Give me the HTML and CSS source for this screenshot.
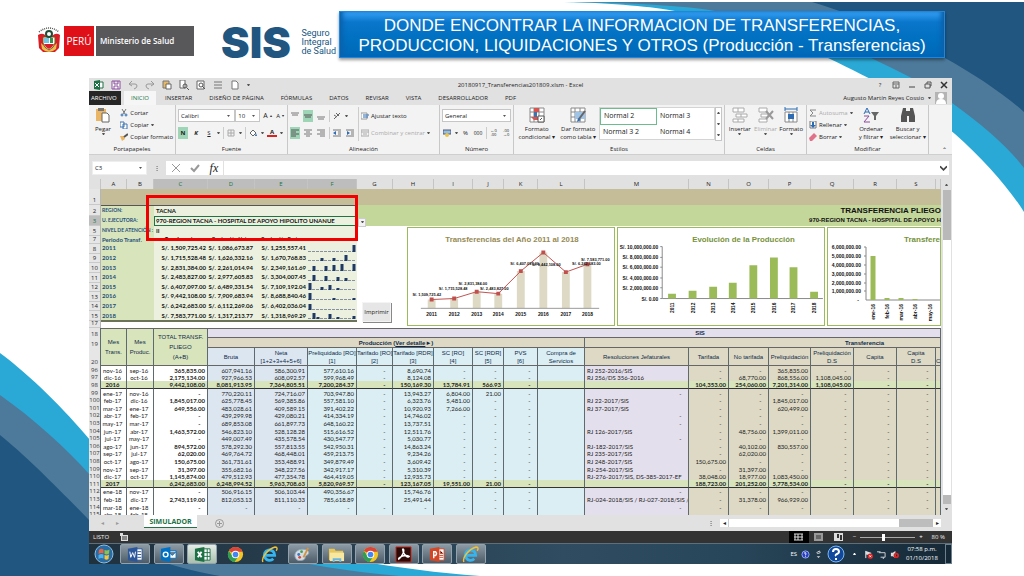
FILE: index.html
```html
<!DOCTYPE html>
<html lang="es">
<head>
    <meta charset="UTF-8">
    <meta name="viewport" content="width=device-width, initial-scale=1.0">
    <title>SIS - Transferencias</title>
    <link rel="stylesheet" href="styles.css">
</head>
<body>
    <!-- Ondas del fondo -->
    <svg class="wave wave-top" viewBox="0 0 460 230">
        <path fill="#2aa9d6" d="M0 2C50 3 90 7 111 11C180 24 230 40 264 58C310 80 350 100 391 134C420 160 445 188 460 212V2Z"/>
        <path fill="#4d7a9b" d="M10 2C80 3 130 7 151 11C220 22 270 40 307 58C350 78 370 90 388 103C420 126 445 148 460 168V2Z"/>
        <path fill="#20567f" d="M248 2C300 18 350 40 381 58C410 74 440 94 460 112V2Z"/>
    </svg>
    <svg class="wave wave-bottom" viewBox="0 0 480 226">
        <path fill="#2aa9d6" d="M0 3C30 25 65 60 90 90C150 165 300 212 480 226H0Z"/>
        <path fill="#4d7a9b" d="M0 45C35 70 65 97 90 125C150 185 280 215 400 226H0Z"/>
        <path fill="#20567f" d="M0 85C25 105 60 140 89 170C110 196 170 218 220 226H0Z"/>
    </svg>

    <!-- Iconos compartidos -->
    <svg class="defs">
        <symbol id="chrome" viewBox="0 0 18 18">
            <circle cx="9" cy="9" r="8" fill="#f3c623"/>
            <path fill="#dc4437" d="M9 9L2 5A8 8 0 0 1 16.400 6H9Z"/>
            <path fill="#2f9e54" d="M2 5A8 8 0 0 0 8 17L12 11L6 11Z"/>
            <circle cx="9" cy="9" r="4" fill="#fff"/><circle cx="9" cy="9" r="3" fill="#4285f4"/>
        </symbol>
        <symbol id="ie" viewBox="0 0 18 18">
            <path fill="none" stroke="#35b4ee" stroke-width="3" d="M4 10H14.500A5.500 5.500 0 1 0 13 13.500"/>
            <path fill="none" stroke="#f0c23a" stroke-width="1.500" d="M2 17C0 13 7 3 15 1C18 1 17 4 16 5"/>
        </symbol>
        <symbol id="grid" viewBox="0 0 16 16">
            <path fill="#fff" stroke="#888" d="M1 1H15V15H1ZM1 5H15M1 10H15M5 1V15M10 1V15"/>
        </symbol>
    </svg>

    <header class="top">
        <div class="ministry">
            <svg class="shield" viewBox="0 0 24 30">
                <path fill="none" stroke="#555" stroke-width="1.500" stroke-dasharray="1 1" d="M2 6Q12 -2 22 6"/>
                <path fill="#d91e26" d="M1 9Q6 6 9 10L12 14L15 10Q19 6 23 9L22 22L18 26H6L2 22Z"/>
                <path fill="#e8c14a" d="M4 17Q12 26 20 17L19 23Q12 29 5 23Z"/>
                <path fill="#fff" stroke="#7b5a1c" d="M6 11H18V17Q17 22 12 24Q7 22 6 17Z"/>
                <path fill="#72c6df" d="M7 12H12V17H7Z"/><path fill="#3b8f48" d="M13 12H16V17H13Z"/>
                <path fill="#d91e26" d="M7 18H17Q16 21 12 23Q8 21 7 18Z"/>
                <circle cx="12" cy="8" r="3" fill="none" stroke="#234c36" stroke-width="2"/>
            </svg>
            <span class="peru">PERÚ</span>
            <span class="minsa">Ministerio de Salud</span>
        </div>
        <div class="sis">
            <strong>SIS</strong>
            <span>Seguro<br>Integral<br>de Salud</span>
        </div>
        <h1 class="banner">DONDE ENCONTRAR LA INFORMACION DE TRANSFERENCIAS,<br>PRODUCCION, LIQUIDACIONES Y OTROS (Producción - Transferencias)</h1>
    </header>

    <main class="window">
        <div class="titlebar">
            <div class="quick">
                <svg viewBox="0 0 10 10"><path fill="#1e7145" d="M0 1L6 0V10L0 9Z"/><path stroke="#1e7145" fill="#fff" d="M6 2H9V8H6"/><path stroke="#fff" d="M1 3L5 7M5 3L1 7"/></svg>
                <svg viewBox="0 0 10 10"><path fill="#fff" stroke="#8a4d9e" d="M1 1H9V9H1ZM3 1V4H7V1M3 9V6H7V9"/></svg>
                <svg viewBox="0 0 10 10"><path fill="none" stroke="#999" d="M4 1L1 4L4 6M1 4H7Q9 4 9 6T6 9"/></svg>
                <svg viewBox="0 0 10 10"><path fill="none" stroke="#999" d="M6 1L9 4L6 6M9 4H3Q1 4 1 6T4 9"/></svg>
                <svg viewBox="0 0 10 10"><path fill="#e7b866" stroke="#777" d="M1 1H7V8H1Z"/><path fill="#fff" stroke="#666" d="M4 4H9V9H4Z"/></svg>
                <svg viewBox="0 0 10 10"><path fill="#fff" stroke="#666" d="M1 0H6V8H1Z"/><circle cx="6" cy="6" r="2" fill="none" stroke="#555"/><path stroke="#555" d="M8 8L10 10"/></svg>
                <svg viewBox="0 0 10 10"><path fill="#fff" stroke="#666" d="M1 1H8V9H1Z"/><circle cx="5" cy="5" r="2" fill="none" stroke="#555"/><path stroke="#555" d="M6 6L9 9"/></svg>
                <svg viewBox="0 0 10 10"><path stroke="#777" d="M1 2H9M1 5H9M1 8H9"/></svg>
                <svg viewBox="0 0 10 10"><path fill="#fff" stroke="#777" d="M2 1H6L8 3V9H2Z"/></svg>
                <i class="arrow"></i>
            </div>
            <span>20180917_Transferencias201809.xlsm - Excel</span>
            <div class="wincontrols">
                <button>?</button>
                <button aria-label="Cinta"><svg viewBox="0 0 8 8"><path fill="none" stroke="#666" d="M1 1H7V7H1ZM1 3H7M4 7V4"/></svg></button>
                <button aria-label="Minimizar"><svg viewBox="0 0 8 8"><path stroke="#444" d="M1 6H7"/></svg></button>
                <button aria-label="Restaurar"><svg viewBox="0 0 8 8"><path fill="none" stroke="#555" d="M1 3H6V7H1ZM3 3V1H7V5H6"/></svg></button>
                <button aria-label="Cerrar"><svg viewBox="0 0 8 8"><path stroke="#333" stroke-width="1.500" d="M1 1L7 7M7 1L1 7"/></svg></button>
            </div>
        </div>
        <nav class="tabs">
            <a href="#" class="file">ARCHIVO</a>
            <a href="#" class="active">INICIO</a>
            <a href="#">INSERTAR</a>
            <a href="#">DISEÑO DE PÁGINA</a>
            <a href="#">FÓRMULAS</a>
            <a href="#">DATOS</a>
            <a href="#">REVISAR</a>
            <a href="#">VISTA</a>
            <a href="#">DESARROLLADOR</a>
            <a href="#">PDF</a>
            <span class="user">Augusto Martín Reyes Cossio <i class="arrow"></i>
                <svg viewBox="0 0 12 12"><path fill="#b4b4b4" d="M0 0H12V12H0Z"/><circle cx="6" cy="4" r="3" fill="#fff"/><path fill="#fff" d="M1 12Q1 7 6 7T11 12Z"/></svg>
            </span>
        </nav>

        <div class="ribbon">
            <section class="group g-clip">
                <div class="tools">
                    <button class="big"><svg viewBox="0 0 16 16"><path fill="#eab565" d="M1 2H11V14H1Z"/><path fill="#777" d="M3 1H9V4H3Z"/><path fill="#fff" stroke="#666" d="M7 6H12L14 8V15H7Z"/></svg>Pegar<i class="arrow"></i></button>
                    <div class="stack">
                        <button><svg viewBox="0 0 8 8"><path stroke="#777" d="M2 0L5 5M6 0L3 5"/><circle cx="2" cy="6" r="1" fill="none" stroke="#2b6cb5"/><circle cx="6" cy="6" r="1" fill="none" stroke="#2b6cb5"/></svg>Cortar</button>
                        <button><svg viewBox="0 0 8 8"><path fill="#fff" stroke="#3d74b0" d="M0 1H4V6H0ZM3 3H7V8H3Z"/></svg>Copiar <i class="arrow"></i></button>
                        <button><svg viewBox="0 0 8 8"><path fill="#eab565" d="M0 3L4 3L5 6L2 8Z"/><path stroke="#555" stroke-width="2" d="M4 4L8 1"/></svg>Copiar formato</button>
                    </div>
                </div>
                <h2>Portapapeles</h2>
            </section>
            <section class="group g-font">
                <div class="stack">
                    <div class="line">
                        <select class="s-font" aria-label="Fuente"><option>Calibri</option></select><select class="s-size" aria-label="Tamaño"><option>10</option></select>
                        <button class="grow">A<sup>▴</sup></button><button>A<sup>▾</sup></button>
                    </div>
                    <div class="line">
                        <button class="on"><b>N</b></button><button><b><em>K</em></b></button><button><u>S</u></button><i class="arrow"></i>
                        <button class="sep" aria-label="Bordes"><svg viewBox="0 0 8 8"><path fill="none" stroke="#aaa" d="M1 1H7V7H1ZM4 1V7M1 4H7"/></svg></button><i class="arrow"></i>
                        <button class="sep" aria-label="Relleno"><svg viewBox="0 0 8 8"><path fill="#fff" stroke="#666" d="M1 4L4 1L7 4L4 7Z"/><path fill="#2b6cb5" d="M7 4L8 7H6Z"/></svg></button><i class="arrow"></i>
                        <button class="fontcolor">A</button><i class="arrow"></i>
                    </div>
                </div>
                <h2>Fuente</h2>
            </section>
            <section class="group g-align">
                <div class="tools">
                    <div class="stack">
                        <div class="line">
                            <button aria-label="Arriba"><svg viewBox="0 0 8 8"><path stroke="#777" d="M0 1H8M1 3H7"/></svg></button>
                            <button class="on" aria-label="Medio"><svg viewBox="0 0 8 8"><path stroke="#555" d="M0 3H8M1 5H7"/></svg></button>
                            <button aria-label="Abajo"><svg viewBox="0 0 8 8"><path stroke="#777" d="M0 5H8M1 7H7"/></svg></button>
                            <button class="sep" aria-label="Orientación"><svg viewBox="0 0 8 8"><path fill="none" stroke="#666" d="M1 7L7 1M1 3L4 5M3 1L6 4"/></svg></button><i class="arrow"></i>
                        </div>
                        <div class="line">
                            <button class="on" aria-label="Izquierda"><svg viewBox="0 0 8 8"><path stroke="#555" d="M0 1H8M0 3H5M0 5H8M0 7H5"/></svg></button>
                            <button aria-label="Centro"><svg viewBox="0 0 8 8"><path stroke="#777" d="M0 1H8M2 3H6M0 5H8M2 7H6"/></svg></button>
                            <button aria-label="Derecha"><svg viewBox="0 0 8 8"><path stroke="#777" d="M0 1H8M3 3H8M0 5H8M3 7H8"/></svg></button>
                            <button class="sep" aria-label="Disminuir sangría"><svg viewBox="0 0 8 8"><path stroke="#777" d="M0 1H8M5 3H8M5 5H8M0 7H8"/><path fill="#2b6cb5" d="M0 4L3 2V6Z"/></svg></button>
                            <button aria-label="Aumentar sangría"><svg viewBox="0 0 8 8"><path stroke="#777" d="M0 1H8M5 3H8M5 5H8M0 7H8"/><path fill="#2b6cb5" d="M4 4L1 2V6Z"/></svg></button>
                        </div>
                    </div>
                    <div class="stack wrapcol">
                        <button><svg viewBox="0 0 8 8"><path fill="#fff" stroke="#999" d="M0 1H6V7H0Z"/><path stroke="#2b6cb5" d="M2 3H8M2 5H7"/></svg>Ajustar texto</button>
                        <button class="off"><svg viewBox="0 0 8 8"><path fill="none" stroke="#aaa" d="M0 1H8V7H0ZM0 3H8M2 5H6"/></svg>Combinar y centrar <i class="arrow"></i></button>
                    </div>
                </div>
                <h2>Alineación</h2>
            </section>
            <section class="group g-num">
                <div class="stack">
                    <div class="line"><select class="s-num" aria-label="Formato de número"><option>General</option></select></div>
                    <div class="line">
                        <button aria-label="Moneda"><svg viewBox="0 0 8 8"><path fill="#8fc1e8" stroke="#557" d="M0 1H8V5H0Z"/><circle cx="4" cy="6" r="2" fill="#eec34a"/></svg></button><i class="arrow"></i>
                        <button>%</button><button class="tiny zeros">000</button>
                        <button class="tiny sep">←0<br>.00</button><button class="tiny">.00<br>→0</button>
                    </div>
                </div>
                <h2>Número</h2>
            </section>
            <section class="group g-styles">
                <div class="tools">
                    <button class="big"><svg viewBox="0 0 16 16"><use href="#grid"/><path fill="#d9534f" d="M5 1H10V5H5ZM2 10H10V13H5Z"/><path fill="#3d74b0" d="M5 5H8V10H5Z"/><path fill="#fff" stroke="#555" d="M9 9H15V15H9ZM11 13L13 11"/></svg>Formato<br>condicional ▾</button>
                    <button class="big"><svg viewBox="0 0 16 16"><use href="#grid"/><path fill="#9dc3e6" d="M5 5H15V12H5Z"/><path stroke="#666" stroke-width="2" d="M15 4L9 12"/><path fill="#2b6cb5" d="M7 15L8 11L11 13Z"/></svg>Dar formato<br>como tabla ▾</button>
                    <div class="gallery">
                        <button class="sel">Normal 2</button><button>Normal 3</button>
                        <button>Normal 3 2</button><button>Normal 4</button>
                    </div>
                    <div class="galscroll"><i class="arrow up"></i><i class="arrow"></i><i class="arrow"></i></div>
                </div>
                <h2>Estilos</h2>
            </section>
            <section class="group g-cells">
                <div class="tools">
                    <button class="big"><svg viewBox="0 0 16 16"><path fill="#fff" stroke="#aaa" d="M1 1H12V5H1ZM4 7H15V10H4ZM1 12H12V15H1ZM6 1V5M9 7V10M6 12V15"/></svg>Insertar<i class="arrow"></i></button>
                    <button class="big off"><svg viewBox="0 0 16 16"><path fill="#fff" stroke="#aaa" d="M1 1H9V5H1ZM1 12H9V15H1ZM3 7H10V10H3Z"/><path stroke="#999" stroke-width="2" d="M8 4L15 12M15 4L8 12"/></svg>Eliminar<i class="arrow"></i></button>
                    <button class="big"><svg viewBox="0 0 16 16"><path fill="#fff" stroke="#888" d="M2 5H14V15H2ZM6 5V15M10 5V15"/><path fill="#2b6cb5" d="M5 7H11V12H5Z"/><path fill="none" stroke="#2b6cb5" d="M2 2H14M2 0V4M14 0V4"/></svg>Formato<i class="arrow"></i></button>
                </div>
                <h2>Celdas</h2>
            </section>
            <section class="group g-edit">
                <div class="tools">
                    <div class="stack">
                        <button class="off"><svg viewBox="0 0 8 8"><path fill="none" stroke="#888" d="M7 1H1L4 4L1 7H7"/></svg>Autosuma <i class="arrow"></i></button>
                        <button><svg viewBox="0 0 8 8"><path fill="#fff" stroke="#777" d="M1 0H7V7H1Z"/><path stroke="#2b6cb5" stroke-width="2" d="M4 1V5"/><path fill="#2b6cb5" d="M1 4H7L4 7Z"/></svg>Rellenar <i class="arrow"></i></button>
                        <button><svg viewBox="0 0 8 8"><path fill="#e0728a" d="M0 5L5 0L8 3L3 8H1Z"/></svg>Borrar <i class="arrow"></i></button>
                    </div>
                    <button class="big"><svg viewBox="0 0 16 16"><path fill="none" stroke="#2b6cb5" d="M1 7L4 1L7 7M2 5H6"/><path fill="none" stroke="#8a4d9e" d="M1 9H6L1 15H7"/><path fill="#666" d="M8 5H16L13 9V13H11V9Z"/></svg>Ordenar<br>y filtrar ▾</button>
                    <button class="big"><svg viewBox="0 0 16 16"><path fill="#555" d="M3 1H6V4H10V1H13L15 9V15H9V9H7V15H1V9Z"/></svg>Buscar y<br>seleccionar ▾</button>
                </div>
                <h2>Modificar</h2>
            </section>
            <span class="collapse">⌃</span>
        </div>

        <div class="formula">
            <select class="namebox" aria-label="Cuadro de nombres"><option>C3</option></select>
            <span class="dots">⋮</span>
            <div class="fx">
                <svg viewBox="0 0 10 10"><path stroke="#999" d="M1 1L9 9M9 1L1 9"/></svg>
                <svg viewBox="0 0 10 10"><path fill="none" stroke="#999" stroke-width="2" d="M1 5L4 8L9 2"/></svg>
                <em>fx</em>
            </div>
            <input type="text" aria-label="Barra de fórmulas">
            <svg class="expand" viewBox="0 0 8 8"><path fill="none" stroke="#444" stroke-width="2" d="M0 2L4 6L8 2"/></svg>
        </div>

        <div class="book">
            <div class="sheet">
                <div class="cols">
                    <span></span><span>A</span><span>B</span><span class="hl">C</span><span class="hl">D</span><span class="hl">E</span><span class="hl">F</span><span>G</span><span>H</span><span>I</span><span>J</span><span>K</span><span>L</span><span>M</span><span>N</span><span>O</span><span>P</span><span>Q</span><span>R</span><span>S</span><span></span>
                </div>
                <div class="upper">
                    <div class="nums">
                        <span>1</span><span>2</span><span class="hl">3</span><span>5</span><span>7</span><span>8</span><span>9</span><span>10</span><span>11</span><span>12</span><span>13</span><span>14</span><span>15</span><span>17</span>
                    </div>
                    <div class="dash">
                        <div class="tan"></div>
                        <div class="body">
                            <div class="left">
                                <div class="field"><span>REGION:</span><b>TACNA</b></div>
                                <div class="field cur"><span>U. EJECUTORA:</span><b>970-REGION TACNA - HOSPITAL DE APOYO HIPOLITO UNANUE</b></div>
                                <div class="field"><span>NIVEL DE ATENCIÓN :</span><b>II</b></div>
                                <table class="years">
                                    <tr class="yh"><th>Periodo Transf.<th>Transferencia<th>Producción Neta<th>Producción Bruta<th></tr>
                                    <tr><th>2011<td>S/. 1,509,725.42<td>S/. 1,086,673.87<td>S/. 1,255,557.41<td><svg viewBox="0 0 48 8"><path d="M46 8V1"/></svg></tr>
                                    <tr><th>2012<td>S/. 1,715,528.48<td>S/. 1,626,332.16<td>S/. 1,670,768.83<td><svg viewBox="0 0 48 8"><path d="M14 8V5M26 8V5M38 8V2"/></svg></tr>
                                    <tr><th>2013<td>S/. 2,831,384.00<td>S/. 2,261,014.94<td>S/. 2,349,161.69<td><svg viewBox="0 0 48 8"><path d="M6 8V3M18 8V3M26 8V2M34 8V1M46 8V1"/></svg></tr>
                                    <tr><th>2014<td>S/. 2,483,827.00<td>S/. 2,977,605.83<td>S/. 3,304,007.45<td><svg viewBox="0 0 48 8"><path d="M6 8V2M18 8V3M30 8V4M38 8V5"/></svg></tr>
                                    <tr><th>2015<td>S/. 6,407,097.00<td>S/. 6,489,331.54<td>S/. 7,109,192.04<td><svg viewBox="0 0 48 8"><path d="M2 8V1M14 8V5M22 8V3M30 8V6"/></svg></tr>
                                    <tr><th>2016<td>S/. 9,442,108.00<td>S/. 7,909,683.94<td>S/. 8,688,840.46<td><svg viewBox="0 0 48 8"><path d="M2 8V1M26 8V6M46 8V6"/></svg></tr>
                                    <tr><th>2017<td>S/. 6,242,683.00<td>S/. 6,112,269.06<td>S/. 6,402,036.04<td><svg viewBox="0 0 48 8"><path d="M2 8V2"/></svg></tr>
                                    <tr><th>2018<td>S/. 7,583,771.00<td>S/. 1,317,213.77<td>S/. 1,318,969.29<td><svg viewBox="0 0 48 8"><path d="M6 8V2M10 8V6M22 8V3M30 8V6M46 8V5"/></svg></tr>
                                </table>
                                <div class="redbox"></div>
                            </div>
                            <div class="right">
                                <div class="green"><div><h3>TRANSFERENCIA PLIEGO</h3><h4>970-REGION TACNA - HOSPITAL DE APOYO H</h4></div></div>
                                <button class="drop" aria-label="Lista"><i class="arrow"></i></button>
                                <div class="charts">
                                    <button class="print">Imprimir</button>
                                    <svg class="chart" viewBox="0 0 208 99">
                                        <text class="t brown" x="105" y="14">Transferencias del Año 2011 al 2018</text>
                                        <path stroke="#ddd9c4" stroke-width="8" d="M23 82V73M46 82V72M69 82V65M91 82V67M114 82V44M137 82V25M160 82V45M182 82V37"/>
                                        <path stroke="#999" d="M12 82H194"/>
                                        <path fill="none" stroke="#c0504d" d="M23 73L46 72L69 65L91 67L114 44L137 25L160 45L182 37"/>
                                        <path fill="#c0504d" d="M21 71h4v4h-4zM44 70h4v4h-4zM67 63h4v4h-4zM89 65h4v4h-4zM112 42h4v4h-4zM135 23h4v4h-4zM158 43h4v4h-4zM180 35h4v4h-4z"/>
                                        <g class="v"><text x="18" y="69">S/. 1,509,725.42</text><text x="45" y="63">S/. 1,715,528.48</text><text x="65" y="58">S/. 2,831,384.00</text><text x="87" y="63">S/. 2,483,827.00</text><text x="118" y="38">S/. 6,407,097.00</text><text x="140" y="39">S/. 9,442,108.00</text><text x="181" y="38">S/. 6,242,683.00</text><text x="190" y="34">S/. 7,583,771.00</text></g>
                                        <g class="y"><text x="23" y="90">2011</text><text x="46" y="90">2012</text><text x="69" y="90">2013</text><text x="91" y="90">2014</text><text x="114" y="90">2015</text><text x="137" y="90">2016</text><text x="160" y="90">2017</text><text x="182" y="90">2018</text></g>
                                    </svg>
                                    <svg class="chart" viewBox="0 0 208 99">
                                        <text class="t olive" x="127" y="14">Evolución de la Producción</text>
                                        <path fill="none" stroke="#888" d="M44 19V72H208M42 19H44M42 30H44M42 40H44M42 51H44M42 61H44M42 72H44"/>
                                        <path stroke="#9bbb59" stroke-width="8" d="M54 72V67M75 72V64M96 72V60M116 72V56M137 72V38M158 72V30M178 72V40M199 72V65"/>
                                        <g class="a"><text x="40" y="21">S/. 10,000,000.00</text><text x="40" y="32">S/. 8,000,000.00</text><text x="40" y="42">S/. 6,000,000.00</text><text x="40" y="53">S/. 4,000,000.00</text><text x="40" y="63">S/. 2,000,000.00</text><text x="40" y="74">S/. 0.00</text></g>
                                        <g class="r"><text transform="translate(56 76) rotate(-90)">2011</text><text transform="translate(77 76) rotate(-90)">2012</text><text transform="translate(98 76) rotate(-90)">2013</text><text transform="translate(118 76) rotate(-90)">2014</text><text transform="translate(139 76) rotate(-90)">2015</text><text transform="translate(160 76) rotate(-90)">2016</text><text transform="translate(180 76) rotate(-90)">2017</text><text transform="translate(201 76) rotate(-90)">2018</text></g>
                                    </svg>
                                    <div class="chart cut">
                                        <svg viewBox="0 0 208 99">
                                            <text class="t olive left-t" x="76" y="14">Transferen</text>
                                            <path fill="none" stroke="#888" d="M38 19V72H208M36 19H38M36 28H38M36 37H38M36 46H38M36 55H38M36 63H38"/>
                                            <path stroke="#9bbb59" stroke-width="5" d="M45 72V28M59 72V70M73 72V70M87 72V71"/>
                                            <g class="a"><text x="33" y="21">6,000,000.00</text><text x="33" y="30">5,000,000.00</text><text x="33" y="39">4,000,000.00</text><text x="33" y="48">3,000,000.00</text><text x="33" y="57">2,000,000.00</text><text x="33" y="65">1,000,000.00</text><text x="31" y="74">-</text></g>
                                            <g class="r"><text transform="translate(47 76) rotate(-90)">ene-16</text><text transform="translate(61 76) rotate(-90)">feb-16</text><text transform="translate(75 76) rotate(-90)">mar-16</text><text transform="translate(89 76) rotate(-90)">abr-16</text><text transform="translate(104 76) rotate(-90)">may-16</text></g>
                                        </svg>
                                    </div>
                                </div>
                            </div>
                        </div>
                    </div>
                </div>

                <div class="lower">
                <table class="data">
                    <colgroup><col class="w12"><col class="w26"><col class="w27"><col class="w54"><col class="w47"><col class="w53"><col class="w49"><col class="w36"><col class="w41"><col class="w39"><col class="w31"><col class="w34"><col class="w47"><col class="w104"><col class="w40"><col class="w40"><col class="w42"><col class="w43"><col class="w43"><col class="w39"><col></colgroup>
                    <thead>
                        <tr class="h18"><th class="n">18<th rowspan="3" class="gr">Mes<br>Trans.<th rowspan="3" class="gr">Mes<br>Produc.<th rowspan="3" class="gr tot">TOTAL TRANSF.<br>PLIEGO<br>(A+B)<th colspan="17" class="lav sisth">SIS</tr>
                        <tr class="h19"><th class="n">19<th colspan="9" class="tn">Producción (<u>Ver detalle</u>►)<th colspan="8" class="tn trth">Transferencia</tr>
                        <tr class="h20"><th class="n">20<th class="b1">Bruta<th class="b1">Neta<br>[1+2+3+4+5+6]<th>Preliquidado [RO]<br>[1]<th>Tarifado [RO]<br>[2]<th>Tarifado [RDR]<br>[3]<th>SC [RO]<br>[4]<th>SC [RDR]<br>[5]<th>PVS<br>[6]<th>Compra de<br>Servicios<th class="tn">Resoluciones Jefaturales<th class="tn">Tarifada<th class="tn">No tarifada<th class="tn">Preliquidación<th class="tn">Preliquidación<br>D.S<th class="tn">Capita<th class="tn">Capita<br>D.S<th class="tn"><br>C</tr>
                    </thead>
                    <tbody>
                        <tr><th>96<td>nov-16<td>sep-16<td>365,835.00<td>607,941.16<td>586,300.91<td>577,610.16<td>-&emsp;<td>8,690.74<td>-&emsp;<td>-&emsp;<td>-&emsp;<td><td>RJ 252-2016/SIS<td>-&emsp;<td>-&emsp;<td>365,835.00<td>-&emsp;<td>-&emsp;<td>-&emsp;<td></tr>
                        <tr><th>97<td>dic-16<td>oct-16<td>2,175,134.00<td>927,966.53<td>608,092.57<td>599,968.49<td>-&emsp;<td>8,124.08<td>-&emsp;<td>-&emsp;<td>-&emsp;<td><td>RJ 256/DS 356-2016<td>-&emsp;<td>68,770.00<td>868,556.00<td>1,108,045.00<td>-&emsp;<td>-&emsp;<td></tr>
                        <tr class="sum"><th>98<td>2016<td><td>9,442,108.00<td>8,081,913.95<td>7,364,805.51<td>7,200,284.37<td>-&emsp;<td>150,169.30<td>13,784.91<td>566.93<td>-&emsp;<td><td><td>104,353.00<td>254,060.00<td>7,201,314.00<td>1,108,045.00<td>-&emsp;<td>-&emsp;<td></tr>
                        <tr><th>99<td>ene-17<td>nov-16<td>-&emsp;<td>770,220.11<td>724,716.07<td>703,947.80<td>-&emsp;<td>13,943.27<td>6,804.00<td>21.00<td>-&emsp;<td><td class="m">-&emsp;<td>-&emsp;<td>-&emsp;<td>-&emsp;<td>-&emsp;<td>-&emsp;<td>-&emsp;<td></tr>
                        <tr><th>100<td>feb-17<td>dic-16<td>1,845,017.00<td>625,778.45<td>569,385.86<td>557,581.10<td>-&emsp;<td>6,323.76<td>5,481.00<td>-&emsp;<td>-&emsp;<td><td>RJ 22-2017/SIS<td>-&emsp;<td>-&emsp;<td>1,845,017.00<td>-&emsp;<td>-&emsp;<td>-&emsp;<td></tr>
                        <tr><th>101<td>mar-17<td>ene-17<td>649,556.00<td>483,028.61<td>409,589.15<td>391,402.22<td>-&emsp;<td>10,920.93<td>7,266.00<td>-&emsp;<td>-&emsp;<td><td>RJ 37-2017/SIS<td>-&emsp;<td>-&emsp;<td>620,499.00<td>-&emsp;<td>-&emsp;<td>-&emsp;<td></tr>
                        <tr><th>102<td>abr-17<td>feb-17<td>-&emsp;<td>439,299.98<td>429,080.21<td>414,334.19<td>-&emsp;<td>14,746.02<td>-&emsp;<td>-&emsp;<td>-&emsp;<td><td class="m">-&emsp;<td>-&emsp;<td>-&emsp;<td>-&emsp;<td>-&emsp;<td>-&emsp;<td>-&emsp;<td></tr>
                        <tr><th>103<td>may-17<td>mar-17<td>-&emsp;<td>689,853.08<td>661,897.73<td>648,160.22<td>-&emsp;<td>13,737.51<td>-&emsp;<td>-&emsp;<td>-&emsp;<td><td class="m">-&emsp;<td>-&emsp;<td>-&emsp;<td>-&emsp;<td>-&emsp;<td>-&emsp;<td>-&emsp;<td></tr>
                        <tr><th>104<td>jun-17<td>abr-17<td>1,463,572.00<td>546,823.10<td>528,128.28<td>515,616.52<td>-&emsp;<td>12,511.76<td>-&emsp;<td>-&emsp;<td>-&emsp;<td><td>RJ 126-2017/SIS<td>-&emsp;<td>48,756.00<td>1,399,011.00<td>-&emsp;<td>-&emsp;<td>-&emsp;<td></tr>
                        <tr><th>105<td>jul-17<td>may-17<td>-&emsp;<td>449,007.49<td>435,578.54<td>430,547.77<td>-&emsp;<td>5,030.77<td>-&emsp;<td>-&emsp;<td>-&emsp;<td><td class="m">-&emsp;<td>-&emsp;<td>-&emsp;<td>-&emsp;<td>-&emsp;<td>-&emsp;<td>-&emsp;<td></tr>
                        <tr><th>106<td>ago-17<td>jun-17<td>894,572.00<td>578,292.30<td>557,813.55<td>542,950.31<td>-&emsp;<td>14,863.24<td>-&emsp;<td>-&emsp;<td>-&emsp;<td><td>RJ-182-2017/SIS<td>-&emsp;<td>40,102.00<td>830,557.00<td>-&emsp;<td>-&emsp;<td>-&emsp;<td></tr>
                        <tr><th>107<td>sep-17<td>jul-17<td>62,020.00<td>469,764.72<td>468,448.01<td>459,213.75<td>-&emsp;<td>9,234.26<td>-&emsp;<td>-&emsp;<td>-&emsp;<td><td>RJ 235-2017/SIS<td>-&emsp;<td>62,020.00<td>-&emsp;<td>-&emsp;<td>-&emsp;<td>-&emsp;<td></tr>
                        <tr><th>108<td>oct-17<td>ago-17<td>150,675.00<td>361,731.61<td>353,488.91<td>349,879.49<td>-&emsp;<td>3,609.42<td>-&emsp;<td>-&emsp;<td>-&emsp;<td><td>RJ 248-2017/SIS<td>150,675.00<td>-&emsp;<td>-&emsp;<td>-&emsp;<td>-&emsp;<td>-&emsp;<td></tr>
                        <tr><th>109<td>nov-17<td>sep-17<td>31,397.00<td>355,682.16<td>348,227.56<td>342,917.17<td>-&emsp;<td>5,310.39<td>-&emsp;<td>-&emsp;<td>-&emsp;<td><td>RJ-254-2017/SIS<td>-&emsp;<td>31,397.00<td>-&emsp;<td>-&emsp;<td>-&emsp;<td>-&emsp;<td></tr>
                        <tr><th>110<td>dic-17<td>oct-17<td>1,145,874.00<td>479,512.93<td>477,354.78<td>464,419.05<td>-&emsp;<td>12,935.73<td>-&emsp;<td>-&emsp;<td>-&emsp;<td><td>RJ-276-2017/SIS, DS-385-2017-EF<td>38,048.00<td>18,977.00<td>1,083,450.00<td>-&emsp;<td>-&emsp;<td>-&emsp;<td></tr>
                        <tr class="sum"><th>111<td>2017<td><td>6,242,683.00<td>6,248,994.52<td>5,963,708.63<td>5,820,969.57<td>-&emsp;<td>123,167.05<td>19,551.00<td>21.00<td>-&emsp;<td><td><td>188,723.00<td>201,252.00<td>5,778,534.00<td>-&emsp;<td>-&emsp;<td>-&emsp;<td></tr>
                        <tr><th>112<td>ene-18<td>nov-17<td>-&emsp;<td>506,916.15<td>506,103.44<td>490,356.67<td><td>15,746.76<td>-&emsp;<td>-&emsp;<td>-&emsp;<td><td class="m">-&emsp;<td>-&emsp;<td>-&emsp;<td>-&emsp;<td>-&emsp;<td>-&emsp;<td>-&emsp;<td></tr>
                        <tr><th>113<td>feb-18<td>dic-17<td>2,743,119.00<td>812,053.13<td>811,110.33<td>785,618.89<td><td>25,491.44<td>-&emsp;<td>-&emsp;<td>-&emsp;<td><td>RJ-024-2018/SIS / RJ-027-2018/SIS / RJ-03<td>-&emsp;<td>31,378.00<td>966,929.00<td>-&emsp;<td>-&emsp;<td>-&emsp;<td></tr>
                        <tr><th>114<td>mar-18<td>ene-18<td>-&emsp;<td>-&emsp;<td>-&emsp;<td>-&emsp;<td>-&emsp;<td>-&emsp;<td>-&emsp;<td>-&emsp;<td>-&emsp;<td><td class="m">-&emsp;<td>-&emsp;<td>-&emsp;<td>-&emsp;<td>-&emsp;<td>-&emsp;<td>-&emsp;<td></tr>
                        <tr><th>115<td>abr-18<td>feb-18<td>-&emsp;<td>-&emsp;<td>-&emsp;<td>-&emsp;<td>-&emsp;<td>-&emsp;<td>-&emsp;<td>-&emsp;<td>-&emsp;<td><td class="m">-&emsp;<td>-&emsp;<td>-&emsp;<td>-&emsp;<td>-&emsp;<td>-&emsp;<td>-&emsp;<td></tr>
                    </tbody>
                </table>
                </div>
            </div>
            <div class="vscroll"><i class="arrow up"></i><span class="thumb"></span><span class="track"></span><span class="thumb small"></span><i class="arrow"></i></div>
        </div>

        <div class="sheetbar">
            <span class="nav">◂</span><span class="nav">▸</span>
            <a href="#" class="sheettab">SIMULADOR</a>
            <button class="add" aria-label="Hoja nueva"><svg viewBox="0 0 9 9"><circle cx="4.500" cy="4.500" r="4" fill="none" stroke="#999"/><path stroke="#999" d="M2 4.500H7M4.500 2V7"/></svg></button>
            <span class="dots">⋮</span>
            <div class="hscroll"><span>◂</span><span class="track"></span><span class="thumb"></span><span>▸</span></div>
        </div>

        <div class="status">
            <span>LISTO</span>
            <svg viewBox="0 0 8 8"><path fill="#ddd" d="M0 0H3V2H8V8H1V3H0Z"/><path stroke="#333" d="M2 4H7M2 6H7"/></svg>
            <div class="views">
                <button class="on" aria-label="Normal"><svg viewBox="0 0 9 8"><path fill="none" stroke="#ddd" d="M0 1H9M0 4H9M0 7H9M1 1V7M4 1V7M8 1V7"/></svg></button>
                <button aria-label="Diseño"><svg viewBox="0 0 9 8"><path fill="#999" d="M0 0H9V8H0Z"/><path stroke="#333" d="M2 3H7M2 5H7"/></svg></button>
                <button aria-label="Salto de página"><svg viewBox="0 0 9 8"><path fill="#ddd" d="M0 0H9V8H0Z"/><path fill="#333" d="M3 1H5V5H3ZM6 2H8V7H6Z"/></svg></button>
            </div>
            <span>−</span>
            <input type="range" min="10" max="150" value="70" aria-label="Zoom">
            <b>+</b>
            <span class="pct">80 %</span>
        </div>

        <div class="taskbar">
            <button class="start" aria-label="Inicio"><svg viewBox="0 0 20 20"><circle cx="10" cy="10" r="9" fill="#2a6ca6" stroke="#8cc0e4"/><path fill="#e8643c" d="M5 6Q7 4 9.500 5.500V9.500Q7 8.500 4.500 10Z"/><path fill="#8cc152" d="M10.500 6Q13 7 15.500 5.500L15 9.500Q13 11 10.500 10Z"/><path fill="#4fb3e8" d="M4.500 11Q7 9.500 9.500 10.500V14.500Q7 13.500 4.500 15Z"/><path fill="#f5c63c" d="M10.500 11Q13 12 15 10.500L14.500 15Q12.500 16.500 10.500 15Z"/></svg></button>
            <div class="apps">
                <button class="run" aria-label="Word"><svg viewBox="0 0 18 18"><path fill="#fff" stroke="#2b579a" d="M9 3H16V15H9Z"/><path stroke="#2b579a" d="M11 6H15M11 9H15M11 12H15"/><path fill="#2b579a" d="M1 3L11 1V17L1 15Z"/><path fill="none" stroke="#fff" d="M3 6L4 12L6 7L8 12L9 6"/></svg></button>
                <button class="run" aria-label="Outlook"><svg viewBox="0 0 18 18"><path fill="#fff" stroke="#0072c6" d="M9 5H17V13H9ZM9 6L13 10L17 6"/><path fill="#0072c6" d="M1 3L11 1V17L1 15Z"/><circle cx="6" cy="9" r="2.500" fill="none" stroke="#fff" stroke-width="1.500"/></svg></button>
                <button class="run lit" aria-label="Excel"><svg viewBox="0 0 18 18"><path fill="#fff" stroke="#1e7145" d="M9 3H17V15H9ZM9 7H17M9 11H17M14 3V15"/><path fill="#1e7145" d="M1 3L11 1V17L1 15Z"/><path stroke="#fff" stroke-width="2" d="M4 6L8 12M8 6L4 12"/></svg></button>
                <button aria-label="Chrome"><svg><use href="#chrome"/></svg></button>
                <button aria-label="Internet Explorer"><svg><use href="#ie"/></svg></button>
                <button class="run" aria-label="Paint"><svg viewBox="0 0 18 18"><path fill="#d5dde4" stroke="#8fa7ba" d="M1 11C0 5 7 2 13 4C17 6 16 9 13 10C11 11 13 14 9 15C5 16 2 15 1 11Z"/><circle cx="5" cy="9" r="1.500" fill="#3b79c4"/><circle cx="8" cy="6" r="1.500" fill="#4aa04a"/><circle cx="6" cy="12" r="1.500" fill="#cf4a3a"/><path stroke="#d39441" stroke-width="2" d="M15 2L10 12"/></svg></button>
                <button class="run" aria-label="Carpeta"><svg viewBox="0 0 18 18"><path fill="#e8c65a" d="M1 3H7L8 5H16V15H1Z"/><path fill="#f8e7a0" d="M2 7H17V16H2Z"/><path fill="#6bb6e0" d="M5 13H14V17H12V15H7V17H5Z"/></svg></button>
                <button class="run" aria-label="Chrome"><svg><use href="#chrome"/></svg></button>
                <button class="run" aria-label="Acrobat"><svg viewBox="0 0 18 18"><path fill="#2b0a08" stroke="#c4362b" d="M1 1H17V17H1Z"/><path fill="none" stroke="#fff" stroke-width="1.500" d="M8 3Q10 3 9 7Q7 12 4 14Q3 13 7 11Q12 9 15 11Q14 13 11 10Q8 7 8 3"/></svg></button>
                <button class="run" aria-label="PowerPoint"><svg viewBox="0 0 18 18"><path fill="#fff" stroke="#d24726" d="M9 3H16V15H9Z"/><path stroke="#d24726" d="M11 10H15M11 12H15M12 5V8H15"/><path fill="#d24726" d="M1 3L11 1V17L1 15Z"/><path fill="none" stroke="#fff" stroke-width="1.500" d="M5 13V6H7Q9 8 7 10H5"/></svg></button>
                <button class="run" aria-label="Internet Explorer"><svg><use href="#ie"/></svg></button>
            </div>
            <div class="tray">
                <span>ES</span>
                <svg viewBox="0 0 10 10"><circle cx="5" cy="5" r="4" fill="#2b3fc0" stroke="#9ab0ff"/><path fill="none" stroke="#fff" d="M4 4Q4 2 5 3T5 6M5 7V8"/></svg>
                <svg viewBox="0 0 10 10"><path fill="none" stroke="#ddd" d="M3 3L6 1L7 3L4 4Z"/><path fill="#ddd" d="M3 7H7L5 9Z"/></svg>
                <svg class="help" viewBox="0 0 18 18"><circle cx="9" cy="9" r="8" fill="#12489c" stroke="#7db8ee"/><path fill="none" stroke="#fff" stroke-width="2" d="M6 7Q6 4 9 4T12 7Q12 8 10 9T9 11M9 13V15"/></svg>
                <i class="arrow up"></i>
                <svg viewBox="0 0 10 10"><path stroke="#fff" d="M2 1V9"/><path fill="#ddd" d="M2 1L8 3V6L2 5Z"/><circle cx="7" cy="7" r="3" fill="#d22"/><path stroke="#fff" d="M6 6L8 8M8 6L6 8"/></svg>
                <svg viewBox="0 0 10 10"><path fill="none" stroke="#ddd" d="M2 3H9V8H4M0 2H4M7 8V10"/></svg>
                <svg viewBox="0 0 10 10"><path fill="#ddd" d="M1 3H3L6 1V9L3 7H1Z"/><circle cx="7" cy="6" r="2" fill="none" stroke="#d22" stroke-width="2"/></svg>
                <time>07:58 p.m.<br>01/10/2018</time>
                <span class="show"></span>
            </div>
        </div>
    </main>
</body>
</html>
```
FILE: styles.css
```css
* {
    box-sizing: border-box;
}
body {
    margin: 0;
    background: #fff;
    font-family: "Open Sans", "Noto Sans", sans-serif;
    font-size: 6px;
    line-height: 8px;
    color: #222;
    overflow: hidden;
    min-height: 100vh;
    position: relative;
}
button, select, input {
    font: inherit;
    color: inherit;
    border: 0;
    padding: 0;
    background: none;
    min-width: 0;
}
a {
    color: inherit;
    text-decoration: none;
}
h1, h2, h3, h4 {
    margin: 0;
    font-weight: normal;
}
.defs {
    position: absolute;
    width: 0;
    height: 0;
}
.wave {
    position: absolute;
    z-index: -1;
}
.wave-top {
    right: 0;
    top: 0;
    width: 460px;
}
.wave-bottom {
    left: 0;
    bottom: 0;
    width: 480px;
}
.arrow {
    display: inline-block;
    border: 1px solid transparent;
    border-top: 2px solid #555;
    border-bottom: 0;
    width: 3px;
    vertical-align: middle;
    flex: none;
}
.arrow.up {
    border-top: 0;
    border-bottom: 2px solid #555;
}

/* Cabecera */
.top {
    display: flex;
    align-items: flex-start;
    padding: 11px 79px 0 37px;
    height: 78px;
}
.ministry {
    display: flex;
    gap: 2px;
    margin-top: 15px;
    height: 30px;
    width: 157px;
    color: #fff;
    line-height: 30px;
}
.shield {
    width: 24px;
    height: 30px;
    margin-right: 1px;
}
.peru {
    background: #e01019;
    width: 30px;
    text-align: center;
    font-size: 10px;
}
.minsa {
    background: #58585a;
    flex: 1;
    padding-left: 4px;
    font-size: 8px;
    font-weight: 600;
}
.sis {
    display: flex;
    margin: 12px 3px 0 27px;
    width: 115px;
    color: #20567f;
    align-items: center;
}
.sis strong {
    font: 900 43px/38px Inter, sans-serif;
    width: 81px;
}
.sis span {
    font-family: Roboto, sans-serif;
    font-size: 9px;
    line-height: 9px;
    white-space: nowrap;
}
.banner {
    flex: 1;
    height: 47px;
    padding-top: 4px;
    font: 17px/20px "Liberation Sans", Arial, sans-serif;
    text-align: center;
    white-space: nowrap;
    color: #fff;
    background: linear-gradient(#35a0f5, #0a76cc 10px, #0070c0 60%, #0068b8);
    border: 1px solid #1f86dd;
    box-shadow: 0 2px 3px rgba(0, 0, 0, 0.4), inset 5px 0 4px -2px #0a62ac, inset -5px 0 4px -2px #0a62ac;
}

/* Ventana */
.window {
    margin: 0 72px 0 89px;
    background: #e1e1e1;
}
.titlebar {
    display: grid;
    grid-template-columns: 1fr auto 1fr;
    align-items: center;
    height: 13px;
}
.quick {
    display: flex;
    align-items: center;
    gap: 7px;
    padding-left: 5px;
}
.quick svg {
    width: 10px;
    height: 10px;
}
.wincontrols {
    display: flex;
    justify-content: flex-end;
    gap: 8px;
    padding-right: 4px;
}
.wincontrols button, .wincontrols svg {
    width: 8px;
    height: 8px;
    display: block;
}
.tabs {
    display: flex;
    height: 14px;
    line-height: 14px;
    align-items: stretch;
}
.tabs a {
    padding: 0 8px 0 9px;
}
.tabs .file {
    background: #262626;
    color: #fff;
    padding: 0 2px;
    width: 32px;
}
.tabs .active {
    background: #f6f6f6;
    color: #217346;
    margin-left: 3px;
    padding: 0 7px;
}
.user {
    margin-left: auto;
    display: flex;
    align-items: center;
    gap: 4px;
    padding-right: 5px;
}
.user svg {
    width: 12px;
    height: 12px;
}
.ribbon {
    display: flex;
    height: 50px;
    background: #f3f3f3;
    border-bottom: 1px solid #cfcfcf;
}
.group {
    display: flex;
    flex-direction: column;
    justify-content: space-between;
    padding: 2px 2px 0;
    border-right: 1px solid #c8c8c8;
}
.group h2 {
    font-size: 6px;
    text-align: center;
    line-height: 9px;
}
.g-clip { width: 87px; }
.g-font { width: 112px; }
.g-align { width: 152px; }
.g-num { width: 74px; }
.g-styles { width: 211px; }
.g-cells { width: 82px; }
.g-edit { width: 122px; }
.group button {
    white-space: nowrap;
    display: flex;
    align-items: center;
    gap: 2px;
}
.group svg {
    width: 8px;
    height: 8px;
    flex: none;
}
.tools {
    display: flex;
    justify-content: space-between;
}
.stack {
    display: flex;
    flex-direction: column;
}
.stack > button {
    height: 12px;
}
.group .big {
    flex-direction: column;
    justify-content: flex-start;
    flex: 1;
    gap: 0;
}
.group .big svg {
    width: 16px;
    height: 16px;
    margin-bottom: 2px;
}
.off {
    color: #aaa;
}
.g-clip .big {
    flex: 0 0 24px;
}
.line {
    display: flex;
    align-items: center;
    height: 17px;
    gap: 3px;
}
.line button {
    width: 10px;
    height: 12px;
    justify-content: center;
}
.line .on {
    background: #9fd5b7;
}
.line .sep {
    border-left: 1px solid #ccc;
    padding-left: 2px;
    width: 13px;
}
.line .tiny {
    font-size: 4px;
    line-height: 4px;
    flex-direction: column;
    gap: 0;
}
.line .zeros {
    font-size: 5px;
}
.line .grow {
    font-size: 7px;
}
.line sup {
    font-size: 4px;
}
.line .fontcolor {
    border-bottom: 2px solid #d22;
    font-weight: bold;
    height: 9px;
}
select {
    appearance: none;
    background: #fff url("data:image/svg+xml,%3Csvg xmlns='http://www.w3.org/2000/svg' width='3' height='2'%3E%3Cpath fill='%23555' d='M0 0H3L1.500 2Z'/%3E%3C/svg%3E") no-repeat right 4px center;
    border: 1px solid #c6c6c6;
    padding-left: 2px;
    height: 13px;
    border-radius: 0;
}
.s-font { width: 59px; }
.s-size { width: 25px; margin-left: -3px; }
.s-num { width: 70px; }
.wrapcol {
    width: 79px;
    border-left: 1px solid #ccc;
    padding-left: 2px;
}
.wrapcol > button {
    height: 17px;
}
.gallery {
    display: grid;
    grid-template-columns: 1fr 1fr;
    width: 116px;
    height: 33px;
    background: #fff;
    border: 1px solid #d4d4d4;
    font-size: 7px;
}
.gallery button {
    padding-left: 3px;
}
.gallery .sel {
    border: 1px solid #6bbd8d;
}
.galscroll {
    width: 7px;
    display: flex;
    flex-direction: column;
    justify-content: space-around;
    align-items: center;
    background: #fff;
    border: 1px solid #c6c6c6;
}
.collapse {
    margin: auto 5px 0 auto;
}
.formula {
    display: flex;
    align-items: center;
    margin-top: 5px;
    height: 15px;
    padding: 0 3px;
    background: #e1e1e1;
}
.namebox {
    width: 55px;
    height: 14px;
    border-color: #eee;
}
.dots {
    width: 19px;
    text-align: center;
}
.fx {
    display: flex;
    align-items: center;
    justify-content: space-around;
    width: 57px;
    height: 14px;
    background: #fff;
    margin-right: 1px;
}
.fx svg {
    width: 10px;
    height: 10px;
}
.fx em {
    font: italic 12px/12px "Liberation Serif", serif;
}
.formula input {
    flex: 1;
    height: 14px;
    background: #fff;
}
.expand {
    width: 11px;
    height: 14px;
    padding: 3px 2px;
    background: #fff;
}

/* Hoja */
.book {
    display: flex;
    margin-top: 4px;
    height: 336px;
    overflow: hidden;
}
.sheet {
    flex: 1;
    min-width: 0;
    background: #fff;
    overflow: hidden;
}
.cols {
    display: grid;
    grid-template-columns: 12px 26px 27px 54px 47px 53px 49px 36px 41px 39px 31px 34px 47px 104px 40px 40px 42px 43px 43px 39px 1fr;
    height: 10px;
    line-height: 10px;
    text-align: center;
    background: #e1e1e1;
}
.cols span {
    border-right: 1px solid #c4c4c4;
}
.cols .hl, .nums .hl {
    background: #bdbdbd;
    color: #217346;
}
.cols .hl {
    border-bottom: 1px solid #217346;
}
.upper {
    display: flex;
    height: 139px;
}
.nums {
    width: 12px;
    background: #e6e6e6;
    display: grid;
    grid-template-rows: 16px 11px 10px 10px 8px repeat(8, 1fr) 7px;
    border-right: 1px solid #b5b5b5;
    text-align: center;
    overflow: hidden;
}
.nums span {
    display: flex;
    align-items: flex-end;
    justify-content: center;
    border-bottom: 1px solid #c9c9c9;
    line-height: 8px;
}
.dash {
    flex: 1;
    min-width: 0;
}
.tan {
    height: 16px;
    background: #c4bd97;
}
.body {
    display: flex;
}
.left {
    width: 256px;
    height: 117px;
    background: #ebf1de;
    border-top: 1px solid #555;
    border-bottom: 2px solid #6b7358;
    position: relative;
    font-family: Lato, sans-serif;
}
.field {
    display: flex;
    height: 10px;
    line-height: 9px;
    color: #111;
    white-space: nowrap;
}
.field span {
    width: 53px;
    padding-left: 1px;
    background: #d8e4bc;
    color: #1f4e79;
    font-size: 5px;
    font-weight: bold;
}
.field b {
    flex: 1;
    padding-left: 2px;
}
.cur b {
    border: 1px solid #217346;
    padding-left: 1px;
    line-height: 8px;
}
.years {
    width: 100%;
    height: 84px;
    border-collapse: collapse;
    table-layout: fixed;
    font-weight: bold;
    color: #111;
}
.years th, .years td {
    padding: 0 2px 0 0;
    text-align: right;
    white-space: nowrap;
    line-height: 7px;
}
.years th:nth-child(2) { width: 54px; }
.years th:nth-child(3) { width: 47px; }
.years th:nth-child(4) { width: 53px; }
.years .yh th {
    height: 7px;
    font-size: 5px;
    text-align: center;
}
.years th:first-child, .years .yh th:first-child {
    width: 53px;
    text-align: left;
    padding-left: 1px;
    background: #d8e4bc;
    color: #1f4e79;
    font-size: 6px;
}
.years svg {
    display: block;
    width: 48px;
    height: 8px;
    stroke: #1f3864;
    stroke-width: 3;
    background: repeating-linear-gradient(90deg, #8591a3 0 3px, transparent 3px 4px) bottom / 100% 1px no-repeat;
}
.years td:last-child {
    padding: 0;
}
.redbox {
    position: absolute;
    left: 45px;
    top: -11px;
    width: 212px;
    height: 46px;
    border: 3px solid #f00000;
    z-index: 2;
}
.right {
    flex: 1;
    min-width: 0;
    position: relative;
}
.green {
    height: 21px;
    background: #c4d79b;
    display: flex;
    justify-content: flex-end;
    padding-top: 1px;
    font-family: "Liberation Sans", sans-serif;
    color: #111;
    text-align: right;
    white-space: nowrap;
}
.green h3 {
    font-size: 8px;
    font-weight: bold;
    line-height: 10px;
}
.green h4 {
    font-size: 6px;
    font-weight: bold;
    line-height: 9px;
}
.drop {
    position: absolute;
    left: 1px;
    top: 13px;
    width: 8px;
    height: 9px;
    background: #f3f3f3;
    border: 1px solid #ccc;
    line-height: 3px;
}
.charts {
    display: flex;
    align-items: flex-start;
    gap: 2px;
    padding: 1px 0 0 5px;
}
.print {
    width: 29px;
    height: 20px;
    margin: 75px 14px 0 0;
    background: #e6e6e6;
    border: 1px solid #f4f4f4;
    box-shadow: 1px 1px 0 #888;
}
.chart {
    width: 208px;
    height: 99px;
    flex: none;
    border: 1px solid #9bbb59;
    background: #fff;
    font-family: "Liberation Sans", sans-serif;
    font-weight: bold;
}
.cut {
    flex: 1;
    min-width: 0;
    overflow: hidden;
}
.cut svg {
    width: 208px;
    height: 99px;
}
.chart text {
    font-size: 5px;
    fill: #111;
}
.chart .t {
    font-size: 8px;
    text-anchor: middle;
}
.chart .left-t {
    text-anchor: start;
}
.chart .brown { fill: #948a54; }
.chart .olive { fill: #76923c; }
.v text, .y text {
    text-anchor: middle;
}
.chart .v text {
    font-size: 4px;
}
.a text, .r text {
    text-anchor: end;
}

/* Tabla de datos */
.lower {
    height: 187px;
    overflow: hidden;
}
.data {
    width: 100%;
    table-layout: fixed;
    border-collapse: separate;
    border-spacing: 0;
    font-family: Lato, sans-serif;
    color: #222;
}
.w12 { width: 12px; }
.w26 { width: 26px; }
.w27 { width: 27px; }
.w31 { width: 31px; }
.w34 { width: 34px; }
.w36 { width: 36px; }
.w39 { width: 39px; }
.w40 { width: 40px; }
.w41 { width: 41px; }
.w42 { width: 42px; }
.w43 { width: 43px; }
.w47 { width: 47px; }
.w49 { width: 49px; }
.w53 { width: 53px; }
.w54 { width: 54px; }
.w104 { width: 104px; }
.data th, .data td {
    padding: 0;
    white-space: nowrap;
    border-right: 1px solid #5f6a70;
}
.data thead th {
    font-family: "Liberation Sans", sans-serif;
    font-size: 6px;
    font-weight: normal;
    line-height: 8px;
    color: #0f2a4a;
    background: #daeef3;
    border-bottom: 1px solid #666;
}
.h18 { height: 10px; }
.h19 { height: 10px; }
.h20 { height: 18px; }
.data thead .gr {
    background: #d8e4bc;
    border-top: 1px solid #666;
    line-height: 10px;
}
.data thead .lav {
    background: #e4dfec;
    border-top: 1px solid #666;
    font-weight: bold;
}
.data thead .sisth { padding-left: 252px; }
.data thead .trth { padding-left: 204px; }
.data thead .tn { background: #ddd9c4; }
.data thead .b1 { background: #dce6f1; }
.data .h19 th { font-weight: bold; }
.data thead .n, .data tbody th {
    font: 6px/7px "Open Sans", sans-serif;
    background: #e6e6e6;
    color: #333;
    vertical-align: bottom;
    border-bottom: 0;
}
.data tbody tr {
    height: 8px;
}
.data tbody tr:nth-child(5n+2), .data tbody tr:nth-child(5n) {
    height: 7px;
}
.data td {
    text-align: right;
    padding-right: 2px;
    line-height: 7px;
    background: #daeef3;
}
.data td:nth-child(2), .data td:nth-child(3) {
    text-align: center;
    background: #fff;
}
.data td:nth-child(4) {
    background: #fff;
    font-weight: bold;
}
.data td:nth-child(5), .data td:nth-child(6) {
    background: #dce6f1;
}
.data td:nth-child(14) {
    background: #e4dfec;
    text-align: left;
    padding-left: 2px;
    overflow: hidden;
}
.data td.m:nth-child(14) {
    text-align: right;
}
.data td:nth-child(n+15) {
    background: #ddd9c4;
}
.data .sum td:nth-child(n) {
    background: #d8e4bc;
    font-weight: bold;
    border-bottom: 1px solid #333;
    line-height: 6px;
}
.vscroll {
    width: 11px;
    padding: 1px 2px;
    display: flex;
    flex-direction: column;
    align-items: center;
    background: #e1e1e1;
}
.vscroll .arrow {
    margin: 4px 0;
}
.vscroll .thumb {
    width: 8px;
    height: 50px;
    background: #b9b9b9;
}
.vscroll .small {
    height: 9px;
}
.vscroll .track {
    flex: 1;
    width: 8px;
    background: #fff;
}
.sheetbar {
    display: flex;
    height: 16px;
    padding-right: 11px;
    align-items: center;
}
.nav {
    width: 15px;
    text-align: right;
    color: #999;
}
.sheettab {
    align-self: flex-start;
    margin-left: 25px;
    width: 53px;
    height: 13px;
    line-height: 13px;
    background: #fff;
    color: #217346;
    font-weight: bold;
    font-size: 7px;
    text-align: center;
    border-bottom: 1px solid #217346;
}
.add {
    margin-left: 18px;
    width: 9px;
    height: 9px;
}
.add svg {
    display: block;
}
.sheetbar .dots {
    margin-left: auto;
}
.hscroll {
    display: flex;
    width: 221px;
    height: 8px;
    background: #fff;
}
.hscroll span {
    width: 8px;
    text-align: center;
}
.hscroll .track {
    flex: 1;
    border-left: 1px solid #ccc;
}
.hscroll .thumb {
    width: 34px;
    background: #bdbdbd;
}
.status {
    display: flex;
    align-items: center;
    gap: 4px;
    height: 12px;
    padding: 0 7px 0 4px;
    background: #333;
    color: #eee;
}
.status > svg {
    width: 8px;
    height: 8px;
    margin-left: 7px;
}
.views {
    display: flex;
    margin-left: auto;
}
.views button {
    width: 20px;
    height: 12px;
    display: flex;
    align-items: center;
    justify-content: center;
}
.views svg {
    width: 9px;
    height: 8px;
}
.views .on {
    background: #000;
}
.status input {
    appearance: none;
    width: 55px;
    height: 8px;
    margin: 0;
    background: linear-gradient(#aaa, #aaa) center / 100% 1px no-repeat;
}
.status input::-webkit-slider-thumb {
    appearance: none;
    width: 3px;
    height: 7px;
    background: #fff;
}
.pct {
    margin-left: 5px;
}
.taskbar {
    display: flex;
    align-items: center;
    height: 21px;
    background: linear-gradient(90deg, #20313e, #2f4c60 55%, #28465a 75%, #152836);
    border-top: 1px solid #5b6f7d;
    color: #fff;
}
.start {
    width: 31px;
    padding-left: 5px;
}
.start svg {
    width: 20px;
    height: 20px;
    display: block;
}
.apps {
    display: flex;
    justify-content: space-between;
    width: 366px;
}
.apps button {
    width: 30px;
    height: 20px;
    display: flex;
    align-items: center;
    justify-content: center;
}
.apps .run {
    background: linear-gradient(#8c9aa4, #4c5c68);
    border: 1px solid #93a2ac;
    border-radius: 2px;
}
.apps .lit {
    background: linear-gradient(#e4ece6, #a9bfae);
}
.apps svg {
    width: 17px;
    height: 17px;
}
.tray {
    display: flex;
    align-items: center;
    gap: 4px;
    margin-left: auto;
}
.tray svg {
    width: 9px;
    height: 9px;
}
.tray .help {
    width: 18px;
    height: 18px;
}
.tray .arrow {
    border-bottom-color: #fff;
    margin: 0 4px;
}
.tray time {
    width: 38px;
    text-align: center;
    line-height: 9px;
}
.show {
    width: 7px;
    height: 20px;
    border: 1px solid #6d808d;
}
```
